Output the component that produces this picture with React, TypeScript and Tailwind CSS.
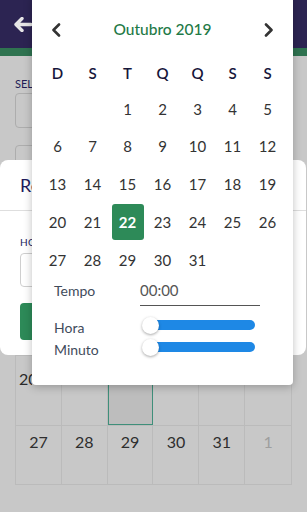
import React from 'react';

const weekDays = ['D', 'S', 'T', 'Q', 'Q', 'S', 'S'];
const weeks: (number | null)[][] = [
  [null, null, 1, 2, 3, 4, 5],
  [6, 7, 8, 9, 10, 11, 12],
  [13, 14, 15, 16, 17, 18, 19],
  [20, 21, 22, 23, 24, 25, 26],
  [27, 28, 29, 30, 31, null, null],
];

const Chevron = ({ dir }: { dir: 'left' | 'right' }) => (
  <svg width="10" height="14" viewBox="0 0 10 14" fill="none">
    <path
      d={dir === 'left' ? 'M8 1.5 2.5 7 8 12.5' : 'M2 1.5 7.5 7 2 12.5'}
      stroke="#333"
      strokeWidth="2.6"
      strokeLinecap="round"
      strokeLinejoin="round"
    />
  </svg>
);

const Slider = () => (
  <div className="relative h-[17px] w-[113px] flex items-center">
    <div className="absolute left-[3px] right-0 h-[10px] rounded-full bg-[#1e88e5]" />
    <div className="absolute left-0 w-[17px] h-[17px] rounded-full bg-white shadow-[0_1px_3px_rgba(0,0,0,0.35)]" />
  </div>
);

const DatePicker: React.FC = () => {
  return (
    <div className="absolute left-[32px] top-[-4px] w-[261px] h-[389px] bg-white rounded shadow-[0_2px_8px_rgba(0,0,0,0.25)] pt-[22px] px-[8px]">
      <div className="h-6 flex items-center justify-between px-[11px]">
        <Chevron dir="left" />
        <span className="text-[15.5px] font-medium text-[#1f7a47]">Outubro 2019</span>
        <Chevron dir="right" />
      </div>
      <div className="grid grid-cols-7 mt-[15px] h-[33px] items-center">
        {weekDays.map((d, i) => (
          <span key={i} className="text-center text-[15px] font-semibold text-[#16163a]">
            {d}
          </span>
        ))}
      </div>
      {weeks.map((w, wi) => (
        <div key={wi} className="grid grid-cols-7 h-[37.75px] items-center">
          {w.map((d, di) => (
            <div key={di} className="flex justify-center">
              {d === 22 ? (
                <span className="w-[32px] h-[36px] rounded-[3px] bg-[#2d8a58] text-white font-bold text-[15px] flex items-center justify-center">
                  {d}
                </span>
              ) : (
                <span className="text-[15px] text-[#333]">{d ?? ''}</span>
              )}
            </div>
          ))}
        </div>
      ))}
      <div className="flex items-start mt-[-1px] pl-[14px]">
        <span className="w-[86px] text-[14px] text-[#3f4b5b] mt-[2px]">Tempo</span>
        <div className="w-[120px] border-b border-[#555] pb-[3px]">
          <span className="text-[15px] text-[#555]">00:00</span>
        </div>
      </div>
      <div className="flex items-center mt-[9px] pl-[14px]">
        <span className="w-[88px] text-[14px] text-[#3f4b5b] translate-y-[2px]">Hora</span>
        <Slider />
      </div>
      <div className="flex items-center mt-[1px] pl-[14px]">
        <span className="w-[88px] text-[14px] text-[#3f4b5b] translate-y-[2px]">Minuto</span>
        <Slider />
      </div>
    </div>
  );
};

const App: React.FC = () => {
  const cols = [0, 1, 2, 3, 4, 5];
  const lastRow = [27, 28, 29, 30, 31, 1];
  return (
    <div
      className="relative w-[307px] h-[512px] overflow-hidden bg-[#c8c8c8]"
      style={{ fontFamily: 'Lato, "Noto Sans", sans-serif' }}
    >
      {/* dimmed page */}
      <div className="h-12 bg-[#2c2452] flex items-center pl-[14px]">
        <svg width="19" height="15" viewBox="0 0 19 15">
          <path
            d="M8 1.5 2 7.5 8 13.5M2.5 7.5H17"
            stroke="#e6e6e6"
            strokeWidth="3.4"
            strokeLinecap="round"
            strokeLinejoin="round"
            fill="none"
          />
        </svg>
      </div>
      <div className="h-2 bg-[#2f7350]" />
      <div className="px-[15px]">
        <p className="mt-[22px] w-[17px] overflow-hidden whitespace-nowrap text-[11px] leading-[12px] text-[#221d55]">
          SELECIONE
        </p>
        <div className="mt-[3px] h-[35px] rounded border border-[#adadad]" />
        <div className="mt-[17px] h-[35px] rounded border border-[#adadad]" />
        <div className="mt-[175px] border border-[#bbbbbb]">
          <div className="grid grid-cols-6 h-[70px] border-b border-[#bbbbbb]">
            {cols.map((c) => (
              <div
                key={c}
                className={`relative border-r border-[#bbbbbb] last:border-r-0 ${
                  c === 2 ? 'bg-[#bdbdbd] border-l border-b border-l-[#3f8f7a] border-r-[#3f8f7a] border-b-[#3f8f7a]' : ''
                }`}
              >
                {c === 0 && (
                  <span className="absolute left-[3px] top-[11px] w-[13px] overflow-hidden text-[16px] text-[#2a2a2a]">
                    20
                  </span>
                )}
              </div>
            ))}
          </div>
          <div className="grid grid-cols-6 h-[58px]">
            {lastRow.map((d, i) => (
              <div key={i} className="border-r border-[#bbbbbb] last:border-r-0 flex justify-center pt-[4px]">
                <span className={`text-[16px] ${i === 5 ? 'text-[#9e9e9e]' : 'text-[#2e2e2e]'}`}>{d}</span>
              </div>
            ))}
          </div>
        </div>
      </div>

      {/* modal card */}
      <div className="absolute left-0 right-[1px] top-[160px] h-[195px] bg-white rounded-lg">
        <div className="h-[51px] border-b border-[#dedede] flex items-center px-5">
          <span className="w-[12px] overflow-hidden whitespace-nowrap text-[18px] text-[#201a5c]">Registrar</span>
        </div>
        <div className="px-5">
          <p className="mt-[24px] w-[12px] overflow-hidden whitespace-nowrap text-[10px] text-[#201a5c] tracking-wide">
            HORÁRIO
          </p>
          <div className="mt-[3px] h-[34px] rounded border border-[#cfcfcf]" />
          <div className="mt-[16px] h-[37px] rounded bg-[#2d8a58]" />
        </div>
      </div>

      <DatePicker />
    </div>
  );
};

export default App;
